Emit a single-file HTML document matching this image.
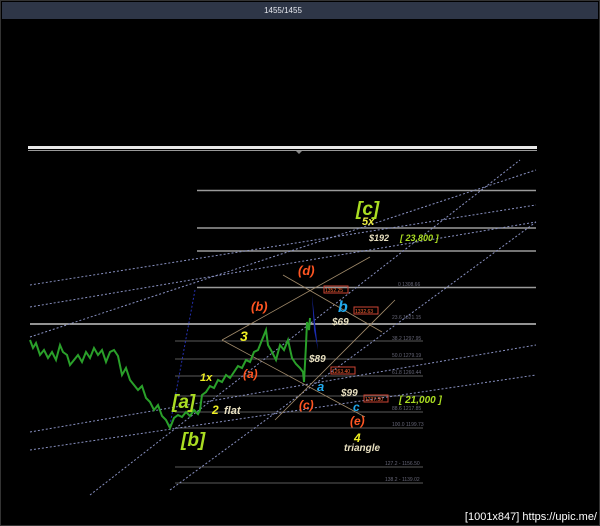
<!DOCTYPE html>
<html><head><meta charset="utf-8"><style>
html,body{margin:0;padding:0;background:#000;width:600px;height:526px;overflow:hidden}
svg{display:block}
text{font-family:"Liberation Sans",sans-serif}
.h{font-family:"Liberation Serif",serif;font-style:italic;font-weight:bold}
</style></head><body>
<svg width="600" height="526" viewBox="0 0 600 526" xmlns="http://www.w3.org/2000/svg">
<rect x="0" y="0" width="600" height="526" fill="#000"/>
<rect x="0.5" y="0.5" width="599" height="525" fill="none" stroke="#333"/>
<rect x="2" y="2" width="596" height="17" fill="#2e3647"/>
<text x="283" y="13" fill="#e6e8ee" font-size="8" text-anchor="middle">1455/1455</text>
<rect x="28" y="146" width="509" height="3" fill="#e8e8e8"/>
<rect x="28" y="150" width="509" height="1" fill="#999"/>
<path d="M296 151 l3 3 l3 -3z" fill="#888"/>
<g stroke="#9a9a9a" stroke-width="1.5">
<line x1="197" y1="190.5" x2="536" y2="190.5"/>
<line x1="197" y1="228" x2="536" y2="228"/>
<line x1="197" y1="251" x2="536" y2="251"/>
<line x1="197" y1="287.5" x2="536" y2="287.5"/>
<line x1="30" y1="324" x2="536" y2="324" stroke="#c4c4c4"/>
</g>
<g stroke="#5a5a5a" stroke-width="1">
<line x1="175" y1="341" x2="423" y2="341"/>
<line x1="175" y1="359" x2="423" y2="359"/>
<line x1="175" y1="376" x2="423" y2="376"/>
<line x1="175" y1="396" x2="423" y2="396"/>
<line x1="175" y1="412" x2="423" y2="412"/>
<line x1="175" y1="428" x2="423" y2="428"/>
<line x1="175" y1="467" x2="423" y2="467"/>
<line x1="175" y1="483" x2="423" y2="483"/>
</g>
<g fill="#667" font-size="5">
<text x="398" y="286">0 1308.66</text><text x="392" y="319">23.6 1321.15</text>
<text x="392" y="340">38.2 1297.95</text><text x="392" y="357">50.0 1279.19</text>
<text x="392" y="374">61.8 1260.44</text><text x="392" y="410">88.6 1217.85</text>
<text x="392" y="426">100.0 1199.73</text><text x="385" y="465">127.2 - 1156.50</text>
<text x="385" y="481">138.2 - 1139.02</text>
</g>
<g stroke="#8890c0" stroke-width="1" stroke-dasharray="2,2" fill="none">
<line x1="30" y1="285" x2="536" y2="205"/>
<line x1="30" y1="307" x2="536" y2="222"/>
<line x1="30" y1="337" x2="536" y2="170"/>
<line x1="30" y1="432" x2="536" y2="345"/>
<line x1="30" y1="450" x2="536" y2="375"/>
<line x1="90" y1="495" x2="520" y2="160"/>
<line x1="170" y1="490" x2="536" y2="222"/>
<line x1="195" y1="290" x2="170" y2="425" stroke="#2530b0"/>
</g>
<g stroke="#a08a6a" stroke-width="0.8" fill="none">
<line x1="222" y1="340" x2="370" y2="257"/>
<line x1="222" y1="340" x2="365" y2="417"/>
<line x1="283" y1="275" x2="382" y2="332"/>
<line x1="275" y1="420" x2="395" y2="300"/>
</g>
<path d="M312 295 L318 350 L322 370 L314 330 Z" fill="#1a2bb0"/>
<polyline fill="none" stroke="#2aa02a" stroke-width="2" points="30,340 33,348 36,343 40,355 44,350 48,358 52,352 56,360 60,345 63,352 67,355 70,365 74,360 78,355 82,362 86,352 90,358 94,348 98,355 102,350 106,362 110,352 114,350 118,356 122,375 126,368 130,380 134,385 138,390 142,386 146,398 150,402 154,410 158,405 162,416 166,420 170,428 174,418 178,415 182,417 186,412 190,416 194,410 198,414 200,410 202,395 206,392 210,386 214,388 218,380 222,382 226,375 230,378 234,372 238,366 242,368 246,360 250,362 254,352 258,350 262,340 266,330 268,345 272,352 276,360 280,345 284,350 288,340 292,358 296,364 300,368 303,372 304,382 306,345 307,322 309,330 310,318"/>
<g class="h">
<text x="356" y="215" fill="#aadd22" font-size="19">[c]</text>
<text x="362" y="225" fill="#eeee44" font-size="11">5x</text>
<text x="369" y="241" fill="#e8e0c0" font-size="9">$192</text>
<text x="400" y="241" fill="#aadd22" font-size="9">[ 23,800 ]</text>
<text x="298" y="275" fill="#ff5522" font-size="13">(d)</text>
<text x="251" y="311" fill="#ff5522" font-size="13">(b)</text>
<text x="338" y="312" fill="#22aaee" font-size="16">b</text>
<text x="332" y="325" fill="#e8e0c0" font-size="10">$69</text>
<text x="240" y="341" fill="#eeee22" font-size="14">3</text>
<text x="309" y="362" fill="#e8e0c0" font-size="10">$89</text>
<text x="243" y="378" fill="#ff5522" font-size="12">(a)</text>
<text x="200" y="381" fill="#eeee22" font-size="11">1x</text>
<text x="317" y="391" fill="#22aaee" font-size="13">a</text>
<text x="341" y="396" fill="#e8e0c0" font-size="10">$99</text>
<text x="172" y="408" fill="#aadd22" font-size="19">[a]</text>
<text x="299" y="409" fill="#ff5522" font-size="12">(c)</text>
<text x="399" y="403" fill="#aadd22" font-size="10">[ 21,000 ]</text>
<text x="353" y="411" fill="#22aaee" font-size="12">c</text>
<text x="212" y="414" fill="#eeee22" font-size="12">2</text>
<text x="224" y="414" fill="#e8e0c0" font-size="11">flat</text>
<text x="350" y="425" fill="#ff5522" font-size="12">(e)</text>
<text x="181" y="446" fill="#aadd22" font-size="19">[b]</text>
<text x="354" y="442" fill="#eeee22" font-size="12">4</text>
<text x="344" y="451" fill="#e8e0c0" font-size="10">triangle</text>
</g>
<g font-size="5" fill="#ff6633">
<rect x="324" y="286" width="24" height="7" fill="none" stroke="#c43"/><text x="325" y="292">1352.25</text>
<rect x="354" y="307" width="24" height="7" fill="none" stroke="#c43"/><text x="355" y="313">1332.63</text>
<rect x="331" y="367" width="24" height="7" fill="none" stroke="#c43"/><text x="332" y="373">1263.40</text>
<rect x="364" y="395" width="24" height="7" fill="none" stroke="#c43"/><text x="365" y="401">1237.50</text>
</g>
<text x="597" y="520" fill="#fff" font-size="11" text-anchor="end">[1001x847] https://upic.me/</text>
</svg>
</body></html>
